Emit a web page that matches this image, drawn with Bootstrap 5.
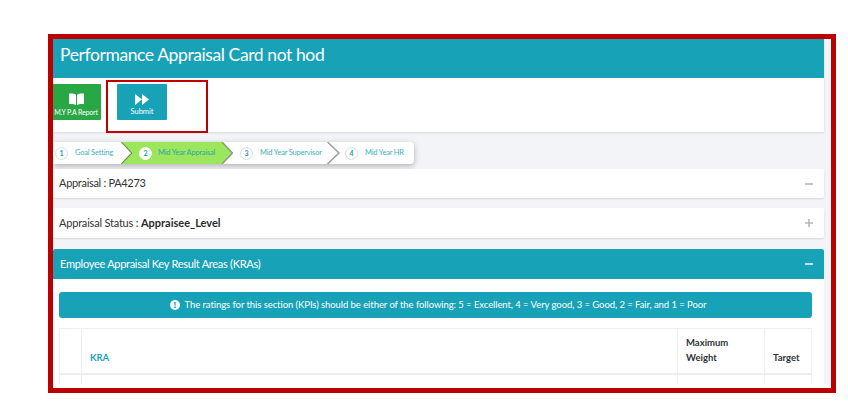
<!DOCTYPE html>
<html lang="en">
<head>
  <meta charset="UTF-8" />
  <meta name="viewport" content="width=device-width, initial-scale=1.0"/>
  <title>Performance Appraisal Card</title>
  <link href="https://cdn.jsdelivr.net/npm/bootstrap@5.3.0/dist/css/bootstrap.min.css" rel="stylesheet"/>
  <style>
    body {
      background: #fff;
      font-family: "Lato", "Liberation Sans", sans-serif;
      color: #333;
      overflow: hidden;
    }
    /* red annotation frame round the captured page */
    .shot-frame {
      width: 788px;
      height: 359px;
      margin: 34px 0 0 48px;
      border: 5px solid #bb0000;
      background: #fff;
      position: relative;
    }
    .shot-page {
      height: 345px;
      overflow: hidden;
      background: #f3f4f8;
      padding-right: 7px;
    }
    .mark-box {
      position: absolute;
      left: 53px;
      top: 41px;
      width: 102px;
      height: 53px;
      border: 2px solid #c00000;
    }
    .app-card {
      border: 0;
      border-radius: 0;
      box-shadow: 0 1px 2px rgba(0,0,0,.12);
    }
    .app-card .title-bar {
      background: #18a2b8;
      color: #fff;
      height: 39px;
      padding: 0 7px;
      font-size: 17.5px;
      letter-spacing: -.4px;
      line-height: 32px;
      border-radius: 0;
      border: 0;
    }
    .tool-row {
      height: 54px;
      padding: 6px 0 0;
      gap: 16px;
    }
    .tool-btn {
      width: 50px;
      height: 36px;
      padding: 6px 0 0;
      border: 0;
      border-radius: 1px;
      color: #fff;
      font-size: 7.5px;
      line-height: 10px;
      white-space: nowrap;
    }
    .tool-btn svg { display: block; margin: 0 auto 2px; }
    .btn-report { background: #2aa745; margin-left: -2px; font-size: 7px; letter-spacing: -.15px; }
    .btn-submit { background: #18a2b8; }
    .wiz {
      width: 361px;
      height: 22px;
      margin: 10px 0 5px;
      background: #fff;
      border-radius: 0 4px 4px 0;
      box-shadow: 0 2px 6px rgba(0,0,0,.28);
      color: #3fb0c2;
      font-size: 7.5px;
      letter-spacing: -.2px;
    }
    .wiz-step { height: 22px; position: relative; flex: none; }
    .wiz-one { width: 80px; padding-left: 2px; }
    .wiz-two { width: 111px; margin-left: -11px; padding-left: 17px; color: #2fa7a0; }
    .wiz-three { width: 111px; margin-left: -4px; padding-left: 11px; }
    .wiz-four { flex: 1; margin-left: -7px; padding-left: 12px; }
    .wiz-num {
      width: 13px;
      height: 13px;
      border-radius: 50%;
      border: 1px solid #d9dde0;
      background: #fff;
      color: #18a2b8;
      font-weight: 700;
      font-size: 7px;
      line-height: 11px;
      text-align: center;
      margin-right: 7px;
      flex: none;
      position: relative;
    }
    .wiz-two .wiz-num { border-color: #fff; margin-right: 6px; }
    .wiz-text { position: relative; white-space: nowrap; }
    .wiz-arrow { position: absolute; right: 0; top: 0; }
    .wiz-fill { position: absolute; left: 0; top: 0; }
    .fold-row {
      height: 29px;
      margin-bottom: 10px;
      padding: 0 11px 0 6px;
      background: #fff;
      font-size: 11px;
      letter-spacing: -.3px;
      border-radius: 2px;
      box-shadow: 0 1px 2px rgba(0,0,0,.12);
    }
    .fold-row.tall { height: 30px; margin-bottom: 11px; letter-spacing: -.2px; }
    .fold-row b { color: #2b2b2b; letter-spacing: 0; }
    .kra-card { border: 0; border-radius: 2px; background: #fff; }
    .kra-card .kra-head {
      height: 30px;
      padding: 0 11px 0 7px;
      background: #18a2b8;
      color: #fff;
      font-size: 11px;
      letter-spacing: -.28px;
      border: 0;
      border-radius: 2px 2px 0 0;
    }
    .kra-body { padding: 13px 12px 0 6px; }
    .rate-note {
      height: 26px;
      margin-bottom: 10px;
      padding: 0 0 0 5px;
      border: 0;
      border-radius: 3px;
      background: #18a2b8;
      color: #fff;
      font-size: 9.5px;
      letter-spacing: -.07px;
      gap: 5px;
    }
    .kra-table { table-layout: fixed; margin: 0; border-color: #eceef0; font-size: 9.5px; }
    .kra-table th {
      padding: 0 8px 8px;
      height: 45px;
      vertical-align: bottom;
      line-height: 15px;
      color: #2f3338;
      border-bottom-width: 2px;
    }
    .kra-table th.kra-name { color: #18a2b8; }
    .kra-table td { height: 30px; }
  </style>
</head>
<body>
  <div class="shot-frame">
    <div class="shot-page">
      <div class="card app-card">
        <div class="card-header title-bar">Performance Appraisal Card not hod</div>
        <div class="d-flex tool-row">
          <button type="button" class="btn tool-btn btn-report">
            <svg width="15" height="12" viewBox="0 0 15 12"><path fill="#fff" d="M0 .6C2.5.3 5.300.5 7 1.700V12C5.300 11 2.500 10.700 0 11ZM15 .6C12.500.3 9.700.5 8 1.700V12C9.700 11 12.500 10.700 15 11Z"/></svg>
            M.Y P.A Report
          </button>
          <button type="button" class="btn tool-btn btn-submit">
            <svg width="14" height="11" viewBox="0 0 14 11"><path fill="#fff" d="M0 0 7 5.500 0 11ZM7 0 14 5.500 7 11Z"/></svg>
            Submit
          </button>
        </div>
      </div>

      <div class="wiz d-flex">
        <div class="wiz-step wiz-one d-flex align-items-center">
          <span class="wiz-num">1</span><span class="wiz-text">Goal Setting</span>
          <svg class="wiz-arrow" width="12" height="22" viewBox="0 0 12 22"><path fill="none" stroke="#6f8a3c" stroke-width="1.500" d="M.5 0 11 11 .5 22"/></svg>
        </div>
        <div class="wiz-step wiz-two d-flex align-items-center">
          <svg class="wiz-fill" width="111" height="22" viewBox="0 0 111 22"><path fill="#9be65d" d="M0 0H100L111 11 100 22H0L11 11Z"/><path fill="none" stroke="#8c9a80" stroke-width="1.500" d="M100 0 110.500 11 100 22"/></svg>
          <span class="wiz-num">2</span><span class="wiz-text">Mid Year Appraisal</span>
        </div>
        <div class="wiz-step wiz-three d-flex align-items-center">
          <span class="wiz-num">3</span><span class="wiz-text">Mid Year Supervisor</span>
          <svg class="wiz-arrow" width="13" height="22" viewBox="0 0 13 22"><path fill="none" stroke="#9a9a9a" stroke-width="1.500" d="M.5 0 12 11 .5 22"/></svg>
        </div>
        <div class="wiz-step wiz-four d-flex align-items-center">
          <span class="wiz-num">4</span><span class="wiz-text">Mid Year HR</span>
        </div>
      </div>

      <div class="fold-row d-flex align-items-center justify-content-between">
        <span>Appraisal : PA4273</span>
        <svg width="8" height="8" viewBox="0 0 8 8"><path fill="#b5b8bb" d="M0 3.200H8V4.800H0Z"/></svg>
      </div>
      <div class="fold-row tall d-flex align-items-center justify-content-between">
        <span>Appraisal Status : <b>Appraisee_Level</b></span>
        <svg width="8" height="8" viewBox="0 0 8 8"><path fill="#b5b8bb" d="M0 3.200H3.200V0H4.800V3.200H8V4.800H4.800V8H3.200V4.800H0Z"/></svg>
      </div>

      <div class="card kra-card">
        <div class="card-header kra-head d-flex align-items-center justify-content-between">
          <span>Employee Appraisal Key Result Areas (KRAs)</span>
          <svg width="8" height="8" viewBox="0 0 8 8"><path fill="#e8f7f9" d="M0 3.200H8V4.800H0Z"/></svg>
        </div>
        <div class="card-body kra-body">
          <div class="alert rate-note d-flex align-items-center justify-content-center" role="alert">
            <svg width="10" height="10" viewBox="0 0 10 10"><circle cx="5" cy="5" r="5" fill="#fff"/><path fill="#18a2b8" d="M4.200 2H5.800L5.500 5.800H4.500ZM4.200 6.500H5.800V8H4.200Z"/></svg>
            <span>The ratings for this section (KPIs) should be either of the following: 5 = Excellent, 4 = Very good, 3 = Good, 2 = Fair, and 1 = Poor</span>
          </div>
          <table class="table table-bordered kra-table">
            <colgroup>
              <col style="width:22px"><col><col style="width:87px"><col style="width:47px">
            </colgroup>
            <thead>
              <tr>
                <th></th>
                <th class="kra-name">KRA</th>
                <th>Maximum Weight</th>
                <th>Target</th>
              </tr>
            </thead>
            <tbody>
              <tr><td></td><td></td><td></td><td></td></tr>
            </tbody>
          </table>
        </div>
      </div>
    </div>
    <div class="mark-box"></div>
  </div>

  <script src="https://cdn.jsdelivr.net/npm/bootstrap@5.3.0/dist/js/bootstrap.bundle.min.js"></script>
</body>
</html>
